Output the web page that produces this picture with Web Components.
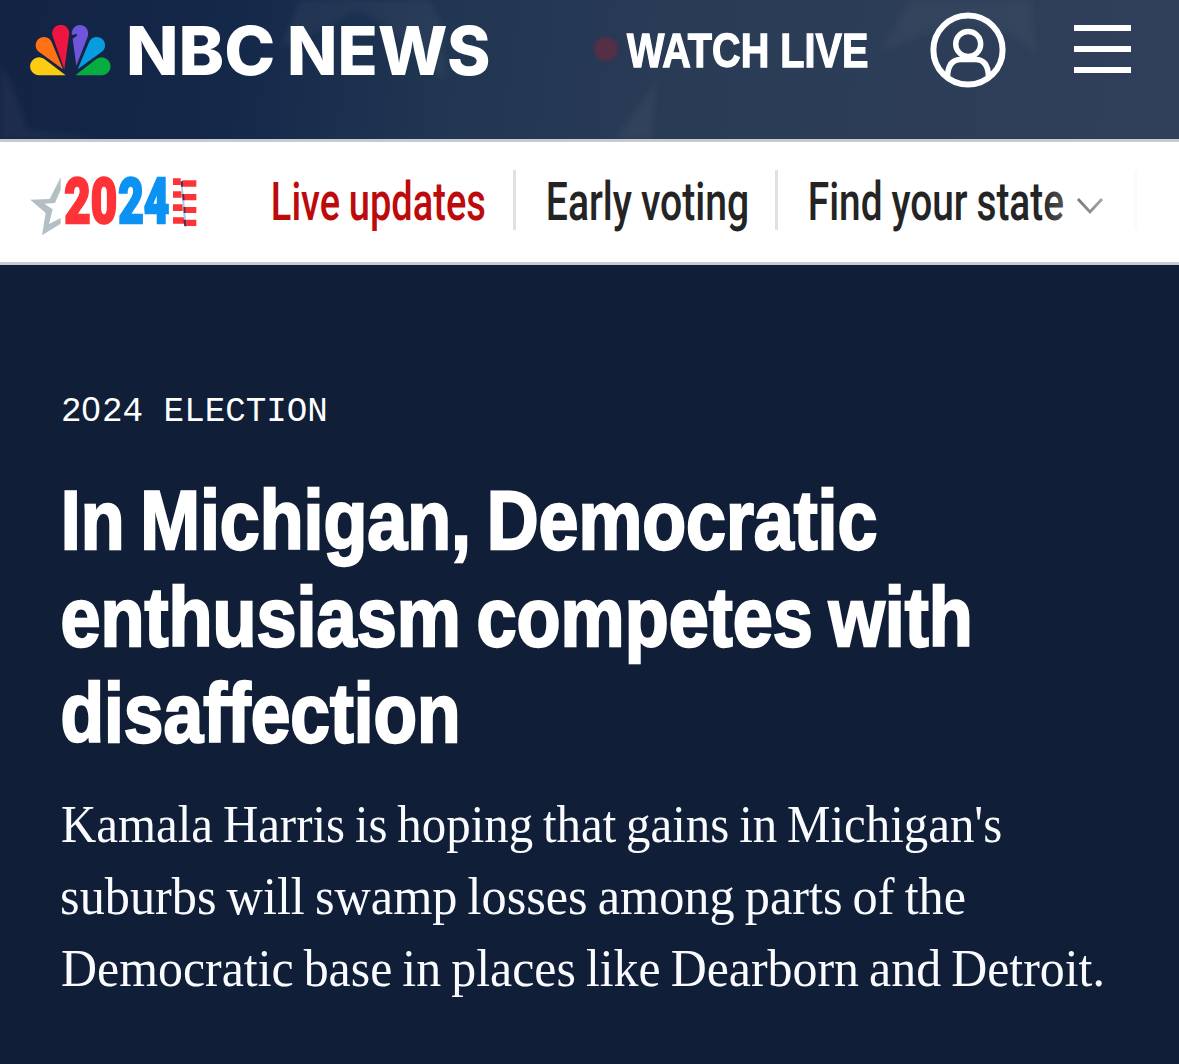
<!DOCTYPE html>
<html lang="en">
<head>
<meta charset="utf-8">
<title>NBC News</title>
<style>
  body {
    margin: 0;
    background: #101f37;
    font-family: Roboto, "Liberation Sans", sans-serif;
  }
</style>
</head>
<body>
<news-page></news-page>

<script>
"use strict";

// One line of text whose drawn glyphs fill exactly the given width.
class FitText extends HTMLElement {
  constructor() {
    super();
    this.attachShadow({ mode: "open" });
  }

  connectedCallback() {
    this.shadowRoot.innerHTML = `
      <style>
        :host { display: block; flex: none; white-space: nowrap; }
        span { display: inline-block; transform-origin: 0 50%; font-kerning: normal; }
      </style>
      <span><slot></slot></span>
    `;
    const width = Number(this.getAttribute("width"));
    this.style.width = `${width}px`;
    const style = getComputedStyle(this);
    const ctx = document.createElement("canvas").getContext("2d");
    ctx.font = `${style.fontWeight} ${style.fontSize} ${style.fontFamily}`;
    const ink = ctx.measureText(this.textContent.trim());
    const span = this.shadowRoot.querySelector("span");
    // side bearings come from the canvas, the advance from the laid out span
    const left = -ink.actualBoundingBoxLeft;
    const right = ink.width - ink.actualBoundingBoxRight;
    const scale = width / (span.getBoundingClientRect().width - left - right);
    span.style.transform = `translateX(${-left * scale}px) scaleX(${scale})`;
  }
}
customElements.define("fit-text", FitText);

class PeacockLogo extends HTMLElement {
  constructor() {
    super();
    this.attachShadow({ mode: "open" });
  }

  connectedCallback() {
    this.shadowRoot.innerHTML = `
      <style>
        :host { display: flex; align-items: center; flex: none; color: #fff; }
        svg { display: block; width: 81px; height: 51px; margin-right: 18px; }
        fit-text { font: 800 67.5px/101px Inter, sans-serif; }
        fit-text + fit-text { margin-left: 17px; }
      </style>
      <svg viewBox="90 74 243 153">
        <path fill="#fccc12" d="M117 225H197L133 176A27 27 0 1 0 117 225Z"/>
        <path fill="#ff7112" d="M189 207 155.1 125.5A25 25 0 1 0 117.4 155.3Z"/>
        <path fill="#ef1541" d="M193 207 207.3 102.5A25.5 25.5 0 1 0 158 107.5Z"/>
        <path fill="#6e55dc" d="M229 196 263 109C269 91 257 74 240 74 226 74 215 84 215 104L230 101Q234 103 229 108L218 115Z"/>
        <path fill="#069de0" d="M233 207 304.6 155.3A25 25 0 1 0 267 125.5Z"/>
        <path fill="#05ac3f" d="M305 225H226L289 176A27 27 0 1 1 305 225Z"/>
      </svg>
      <fit-text width="144">NBC</fit-text>
      <fit-text width="199">NEWS</fit-text>
    `;
  }
}
customElements.define("peacock-logo", PeacockLogo);

class SiteHeader extends HTMLElement {
  constructor() {
    super();
    this.attachShadow({ mode: "open" });
  }

  connectedCallback() {
    this.shadowRoot.innerHTML = `
      <style>
        :host {
          display: block;
          position: relative;
          height: 139px;
          overflow: hidden;
          background: linear-gradient(97deg, #132344 0%, #14284a 20%, #213652 38%, #2a3b56 58%, #30405a 100%);
          color: #fff;
        }
        .haze { position: absolute; top: 0; left: 0; filter: blur(3px); }
        .bar { position: relative; display: flex; align-items: center; height: 101px; padding: 0 48px 0 30px; }
        .dot { width: 24px; height: 24px; margin: 0 0 3px 104.5px; border-radius: 50%; background: #542f46; filter: blur(1.5px); }
        .live { margin-left: 9.5px; font: 700 48px/99px "Liberation Sans", sans-serif; -webkit-text-stroke: 1.3px; }
        .user { width: 76px; height: 76px; margin: 0 0 1px 62px; }
        .menu { width: 57px; height: 48px; margin: 0 0 3px auto; }
        svg { display: block; flex: none; }
      </style>
      <svg class="haze" width="1179" height="139">
        <path fill="#fff" fill-opacity=".045" d="M0 62 12 85 28 130 110 139H0ZM300 0H430L442 25 446 82 385 25 358 10 325 28 280 48ZM615 139 657 80 652 139Z"/>
        <path fill="#fff" fill-opacity=".03" d="M910 0H1032L1036 54 1010 35 960 20 880 52Z"/>
      </svg>
      <div class="bar">
        <peacock-logo></peacock-logo>
        <div class="dot"></div>
        <fit-text class="live" width="240.5">WATCH LIVE</fit-text>
        <svg class="user" viewBox="0 0 76 76" fill="none" stroke="#fff">
          <circle cx="38" cy="38" r="34.6" stroke-width="6"/>
          <circle cx="38.2" cy="32" r="12.5" stroke-width="5.4"/>
          <path stroke-width="5.6" d="M17.5 64C18 53 22.5 47.5 31 47.5H45.5C54 47.5 58 53 58.5 64"/>
        </svg>
        <svg class="menu" viewBox="0 0 57 48" fill="#fff">
          <path d="M0 0H57V6H0ZM0 21H57V27H0ZM0 42H57V48H0Z"/>
        </svg>
      </div>
    `;
  }
}
customElements.define("site-header", SiteHeader);

class ElectionLogo extends HTMLElement {
  constructor() {
    super();
    this.attachShadow({ mode: "open" });
  }

  connectedCallback() {
    this.shadowRoot.innerHTML = `
      <style>
        :host { display: flex; align-items: center; flex: none; }
        svg { display: block; flex: none; }
        .star { width: 31px; height: 59px; margin: 9px 4px 0 0; }
        .flag { width: 24px; height: 49px; margin-left: 4.5px; }
        fit-text { font: 900 62.5px/120px Roboto, sans-serif; -webkit-text-stroke: 2.4px; }
        .red { color: #fd3338; }
        .blue { color: #0b92f2; margin-left: 3.5px; }
      </style>
      <svg class="star" viewBox="91 83 93 177">
        <path fill="#b3bfc5" d="M92 151 150 149 183 84V121L166 161 134 163 159 180 148 224 183 206V223L127 258 138 191Z"/>
      </svg>
      <fit-text class="red" width="50.5">20</fit-text>
      <fit-text class="blue" width="49.5">24</fit-text>
      <svg class="flag" viewBox="520 83 72 147">
        <path fill="#fd3338" d="M520 84H543V104H520ZM520 123H546V142H520ZM520 162H549V182H520ZM520 201H553V220H520ZM548 90H590V109H550ZM551 131H590V150H553ZM555 170H590V188H557ZM559 208H590V227H560Z"/>
        <path fill="#a9cdeb" d="M543 93H548L561 227H554Z"/>
        <path fill="#67263b" d="M542 93H550V109H544ZM547 131H553L555 150H549ZM551 170H557L558 188H552ZM551 208H559L561 228H554Z"/>
      </svg>
    `;
  }
}
customElements.define("election-logo", ElectionLogo);

class ElectionNav extends HTMLElement {
  constructor() {
    super();
    this.attachShadow({ mode: "open" });
  }

  connectedCallback() {
    this.shadowRoot.innerHTML = `
      <style>
        :host {
          display: flex;
          align-items: center;
          position: relative;
          height: 120px;
          padding-left: 30px;
          overflow: hidden;
          border-top: 3px solid #c6cbd2;
          border-bottom: 3px solid #c6cbd2;
          background: #fff;
          color: #242424;
        }
        fit-text { font: 500 53px/120px Roboto, sans-serif; word-spacing: -1px; }
        .current { margin-left: 76px; color: #bd0b0b; }
        i { flex: none; width: 3px; height: 60px; margin: 0 32px 4px 28px; background: #e1e1e1; }
        .chevron { flex: none; width: 28px; height: 18px; margin: 7px 0 0 13px; }
        .last { margin: 0 0 4px 30px; }
        .fade {
          position: absolute;
          inset: 0 0 0 auto;
          width: 139px;
          background: linear-gradient(90deg, rgba(255,255,255,0), #fff 112px);
        }
      </style>
      <election-logo></election-logo>
      <fit-text class="current" width="212">Live updates</fit-text>
      <i></i>
      <fit-text width="199">Early voting</fit-text>
      <i></i>
      <fit-text width="253">Find your state</fit-text>
      <svg class="chevron" viewBox="0 0 28 18" fill="none" stroke="#333" stroke-width="2.8">
        <path d="M2 2 14 15 26 2"/>
      </svg>
      <i class="last"></i>
      <div class="fade"></div>
    `;
  }
}
customElements.define("election-nav", ElectionNav);

class ArticleHero extends HTMLElement {
  constructor() {
    super();
    this.attachShadow({ mode: "open" });
  }

  connectedCallback() {
    this.shadowRoot.innerHTML = `
      <style>
        :host { display: block; height: 675px; padding: 124px 61px 0; background: #101f37; color: #fff; }
        .eyebrow { height: 40px; font: 400 34.2px/40px "Liberation Mono", monospace; white-space: pre; }
        .eyebrow span { font-family: "Liberation Sans", sans-serif; letter-spacing: .044em; }
        h1 {
          margin: 43px 0 0;
          padding-left: 2px;
          font: 700 84px/96.5px "Liberation Sans", sans-serif;
          word-spacing: -5px;
          -webkit-text-stroke: 2.4px;
        }
        .first { margin-left: 2px; }
        .dek { margin-top: 27px; padding-left: .5px; font: 400 52px/72px "Liberation Serif", serif; color: #fafbff; word-spacing: -2.5px; }
      </style>
      <div class="eyebrow">2<span>0</span>24 ELECTION</div>
      <h1>
        <fit-text class="first" width="811">In Michigan, Democratic</fit-text>
        <fit-text width="906">enthusiasm competes with</fit-text>
        <fit-text width="394">disaffection</fit-text>
      </h1>
      <div class="dek">
        <fit-text width="939">Kamala Harris is hoping that gains in Michigan's</fit-text>
        <fit-text width="903">suburbs will swamp losses among parts of the</fit-text>
        <fit-text width="1040">Democratic base in places like Dearborn and Detroit.</fit-text>
      </div>
    `;
  }
}
customElements.define("article-hero", ArticleHero);

class NewsPage extends HTMLElement {
  constructor() {
    super();
    this.attachShadow({ mode: "open" });
  }

  connectedCallback() {
    this.shadowRoot.innerHTML = `
      <style>
        :host { display: block; width: 1179px; height: 1064px; overflow: hidden; }
      </style>
      <site-header></site-header>
      <election-nav></election-nav>
      <article-hero></article-hero>
    `;
  }
}
customElements.define("news-page", NewsPage);
</script>
</body>
</html>
